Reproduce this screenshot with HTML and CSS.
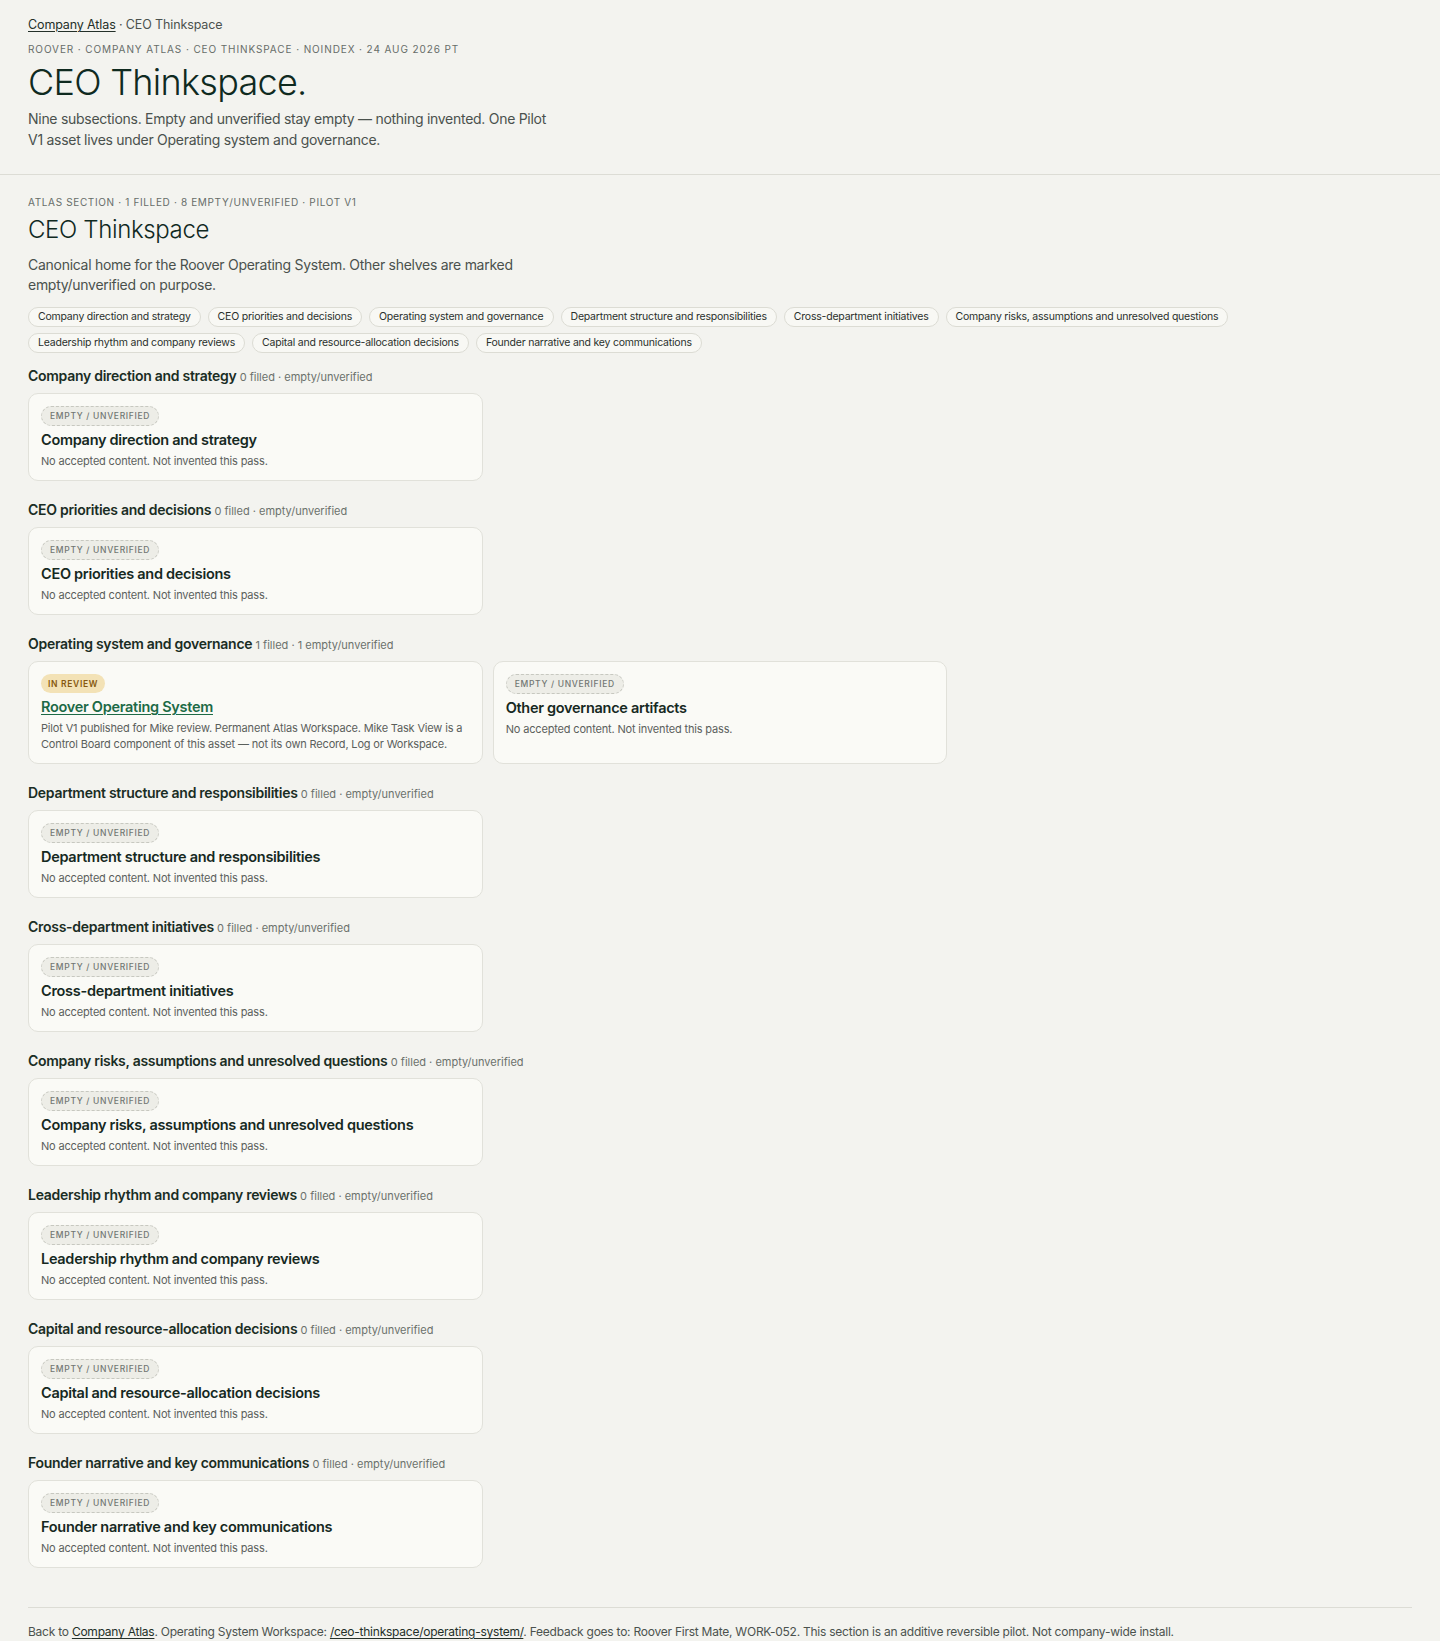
FILE: index.html
```html
<!DOCTYPE html>
<html lang="en">
<head>
<meta charset="utf-8">
<title>CEO Thinkspace · Company Atlas</title>
<link rel="stylesheet" href="styles.css">
</head>
<body>
<header class="top">
  <nav class="crumbs"><a href="#">Company Atlas</a> · CEO Thinkspace</nav>
  <p class="eyebrow">Roover · Company Atlas · CEO Thinkspace · noindex · 24 Aug 2026 PT</p>
  <h1 class="title">CEO Thinkspace.</h1>
  <p class="lede">Nine subsections. Empty and unverified stay empty — nothing invented. One Pilot V1 asset lives under Operating system and governance.</p>
</header>

<main class="section">
  <p class="eyebrow eyebrow-first">Atlas section · 1 filled · 8 empty/unverified · Pilot V1</p>
  <h2 class="section-title">CEO Thinkspace</h2>
  <p class="desc">Canonical home for the Roover Operating System. Other shelves are marked empty/unverified on purpose.</p>

  <nav class="chips">
    <a class="chip" href="#s1">Company direction and strategy</a>
    <a class="chip" href="#s2">CEO priorities and decisions</a>
    <a class="chip" href="#s3">Operating system and governance</a>
    <a class="chip" href="#s4">Department structure and responsibilities</a>
    <a class="chip" href="#s5">Cross-department initiatives</a>
    <a class="chip" href="#s6">Company risks, assumptions and unresolved questions</a>
    <a class="chip" href="#s7">Leadership rhythm and company reviews</a>
    <a class="chip" href="#s8">Capital and resource-allocation decisions</a>
    <a class="chip" href="#s9">Founder narrative and key communications</a>
  </nav>

  <div class="shelves">
    <section class="shelf" id="s1">
      <h3 class="shelf-title">Company direction and strategy <span class="shelf-meta">0 filled · empty/unverified</span></h3>
      <div class="cards">
        <article class="card">
          <span class="badge badge-empty">Empty / unverified</span>
          <h4 class="card-title">Company direction and strategy</h4>
          <p class="card-desc">No accepted content. Not invented this pass.</p>
        </article>
      </div>
    </section>

    <section class="shelf" id="s2">
      <h3 class="shelf-title">CEO priorities and decisions <span class="shelf-meta">0 filled · empty/unverified</span></h3>
      <div class="cards">
        <article class="card">
          <span class="badge badge-empty">Empty / unverified</span>
          <h4 class="card-title">CEO priorities and decisions</h4>
          <p class="card-desc">No accepted content. Not invented this pass.</p>
        </article>
      </div>
    </section>

    <section class="shelf" id="s3">
      <h3 class="shelf-title">Operating system and governance <span class="shelf-meta">1 filled · 1 empty/unverified</span></h3>
      <div class="cards">
        <article class="card">
          <span class="badge badge-review">In review</span>
          <h4 class="card-title"><a class="card-link" href="#">Roover Operating System</a></h4>
          <p class="card-desc">Pilot V1 published for Mike review. Permanent Atlas Workspace. Mike Task View is a Control Board component of this asset — not its own Record, Log or Workspace.</p>
        </article>
        <article class="card">
          <span class="badge badge-empty">Empty / unverified</span>
          <h4 class="card-title">Other governance artifacts</h4>
          <p class="card-desc">No accepted content. Not invented this pass.</p>
        </article>
      </div>
    </section>

    <section class="shelf" id="s4">
      <h3 class="shelf-title">Department structure and responsibilities <span class="shelf-meta">0 filled · empty/unverified</span></h3>
      <div class="cards">
        <article class="card">
          <span class="badge badge-empty">Empty / unverified</span>
          <h4 class="card-title">Department structure and responsibilities</h4>
          <p class="card-desc">No accepted content. Not invented this pass.</p>
        </article>
      </div>
    </section>

    <section class="shelf" id="s5">
      <h3 class="shelf-title">Cross-department initiatives <span class="shelf-meta">0 filled · empty/unverified</span></h3>
      <div class="cards">
        <article class="card">
          <span class="badge badge-empty">Empty / unverified</span>
          <h4 class="card-title">Cross-department initiatives</h4>
          <p class="card-desc">No accepted content. Not invented this pass.</p>
        </article>
      </div>
    </section>

    <section class="shelf" id="s6">
      <h3 class="shelf-title">Company risks, assumptions and unresolved questions <span class="shelf-meta">0 filled · empty/unverified</span></h3>
      <div class="cards">
        <article class="card">
          <span class="badge badge-empty">Empty / unverified</span>
          <h4 class="card-title">Company risks, assumptions and unresolved questions</h4>
          <p class="card-desc">No accepted content. Not invented this pass.</p>
        </article>
      </div>
    </section>

    <section class="shelf" id="s7">
      <h3 class="shelf-title">Leadership rhythm and company reviews <span class="shelf-meta">0 filled · empty/unverified</span></h3>
      <div class="cards">
        <article class="card">
          <span class="badge badge-empty">Empty / unverified</span>
          <h4 class="card-title">Leadership rhythm and company reviews</h4>
          <p class="card-desc">No accepted content. Not invented this pass.</p>
        </article>
      </div>
    </section>

    <section class="shelf" id="s8">
      <h3 class="shelf-title">Capital and resource-allocation decisions <span class="shelf-meta">0 filled · empty/unverified</span></h3>
      <div class="cards">
        <article class="card">
          <span class="badge badge-empty">Empty / unverified</span>
          <h4 class="card-title">Capital and resource-allocation decisions</h4>
          <p class="card-desc">No accepted content. Not invented this pass.</p>
        </article>
      </div>
    </section>

    <section class="shelf" id="s9">
      <h3 class="shelf-title">Founder narrative and key communications <span class="shelf-meta">0 filled · empty/unverified</span></h3>
      <div class="cards">
        <article class="card">
          <span class="badge badge-empty">Empty / unverified</span>
          <h4 class="card-title">Founder narrative and key communications</h4>
          <p class="card-desc">No accepted content. Not invented this pass.</p>
        </article>
      </div>
    </section>
  </div>

  <footer class="foot">
    Back to <a href="#">Company Atlas</a>. Operating System Workspace: <a href="#">/ceo-thinkspace/operating-system/</a>. Feedback goes to: Roover First Mate, WORK-052. This section is an additive reversible pilot. Not company-wide install.
  </footer>
</main>
</body>
</html>
```

FILE: styles.css
```css
* { box-sizing: border-box; }

html, body {
  margin: 0;
  padding: 0;
  background: #f3f3ef;
}

body {
  font-family: Inter, "Noto Sans", "Liberation Sans", sans-serif;
  color: #14271e;
  -webkit-font-smoothing: antialiased;
}

a { color: inherit; }

/* ---------- header ---------- */
.top {
  padding: 16px 28px 24px;
  border-bottom: 1px solid #dcdcd5;
}

.crumbs {
  font-size: 12.5px;
  line-height: 18px;
  color: #4b524e;
  letter-spacing: -0.01em;
}

.crumbs a {
  color: #243029;
  text-decoration: underline;
  text-underline-offset: 2px;
  text-decoration-thickness: 1px;
}

.eyebrow {
  margin: 8px 0 0;
  font-size: 10px;
  line-height: 14px;
  letter-spacing: 0.09em;
  text-transform: uppercase;
  color: #676d69;
}

.eyebrow-first {
  margin-top: 0;
  letter-spacing: 0.065em;
}

.title {
  margin: 4px 0 0;
  font-size: 36px;
  line-height: 44px;
  font-weight: 300;
  letter-spacing: -0.02em;
  color: #0f2a1f;
}

.lede {
  margin: 4px 0 0;
  max-width: 530px;
  font-size: 14px;
  line-height: 21px;
  letter-spacing: -0.02em;
  color: #4a514d;
}

/* ---------- section ---------- */
.section {
  padding: 20px 28px 2px;
}

.section-title {
  margin: 6px 0 0;
  font-size: 24px;
  line-height: 30px;
  font-weight: 300;
  letter-spacing: -0.015em;
  color: #10291f;
}

.desc {
  margin: 10px 0 0;
  max-width: 530px;
  font-size: 14px;
  line-height: 20px;
  letter-spacing: -0.02em;
  color: #4a514d;
}

.chips {
  margin-top: 12px;
  display: flex;
  flex-wrap: wrap;
  gap: 6px 7px;
}

.chip {
  font-size: 10.5px;
  line-height: 14px;
  padding: 2px 9px;
  border: 1px solid #dcdcd4;
  border-radius: 999px;
  background: #f8f8f4;
  color: #2a302c;
  text-decoration: none;
  letter-spacing: -0.02em;
}

.shelves {
  margin-top: 14px;
  display: flex;
  flex-direction: column;
  gap: 20px;
}

.shelf-title {
  margin: 0;
  height: 18px;
  font-size: 14px;
  line-height: 18px;
  font-weight: 600;
  letter-spacing: -0.02em;
  color: #1a2d24;
}

.shelf-meta {
  font-size: 11px;
  line-height: 1;
  font-weight: 400;
  letter-spacing: 0;
  color: #6b716c;
}

.cards {
  margin-top: 8px;
  display: grid;
  grid-template-columns: repeat(3, 1fr);
  gap: 10px;
}

.card {
  display: flex;
  flex-direction: column;
  align-items: flex-start;
  background: #fafaf6;
  border: 1px solid #e1e1da;
  border-radius: 10px;
  padding: 12px 12px 11px;
}

.badge {
  display: block;
  font-size: 8.5px;
  line-height: 12px;
  font-weight: 500;
  letter-spacing: 0.08em;
  text-transform: uppercase;
  border-radius: 999px;
}

.badge-empty {
  padding: 3px 8px;
  background: #ededE7;
  border: 1px dashed #c7c8c0;
  color: #727773;
}

.badge-review {
  padding: 3.5px 7px;
  background: #f3e2b6;
  color: #87590f;
  font-weight: 600;
}

.card-title {
  margin: 4px 0 0;
  font-size: 14.5px;
  line-height: 20px;
  font-weight: 600;
  letter-spacing: -0.02em;
  color: #16291f;
}

.card-link {
  color: #1d6a46;
  text-decoration: underline;
  text-underline-offset: 2px;
  text-decoration-thickness: 1px;
}

.card-desc {
  margin: 3px 0 0;
  font-size: 11px;
  line-height: 16px;
  letter-spacing: -0.015em;
  color: #5a605c;
}

/* ---------- footer ---------- */
.foot {
  margin-top: 39px;
  border-top: 1px solid #dcdcd5;
  padding: 15px 0 0;
  font-size: 12px;
  line-height: 17px;
  color: #4b524e;
  letter-spacing: -0.02em;
}

.foot a {
  color: #243029;
  text-decoration: underline;
  text-underline-offset: 2px;
}
```
